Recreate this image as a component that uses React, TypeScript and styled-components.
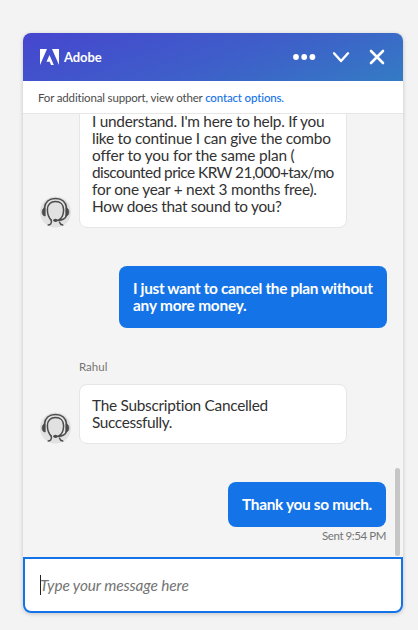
import React from 'react';
import styled, { createGlobalStyle } from 'styled-components';

const GlobalStyle = createGlobalStyle`
  *, *::before, *::after { box-sizing: border-box; }
  body {
    margin: 0;
    background: #f3f3f3;
    font-family: Lato, 'Noto Sans', sans-serif;
  }
`;

const Page = styled.main`
  height: 630px;
  padding: 33px 15px 17px 23px;
  overflow: hidden;
`;

const Panel = styled.section`
  display: flex;
  flex-direction: column;
  width: 380px;
  height: 580px;
  border-radius: 8px;
  background: #f4f4f4;
  box-shadow: 0 1px 4px rgba(0, 0, 0, 0.2);
`;

const Header = styled.header`
  display: flex;
  align-items: center;
  flex: 0 0 48px;
  padding: 0 17px;
  border-radius: 8px 8px 0 0;
  background: linear-gradient(160deg, #4646cf 0%, #3e5fc9 55%, #347bc4 100%);
  color: #fff;
`;

const Brand = styled.div`
  display: flex;
  align-items: center;
  flex: 1;
  gap: 5px;
`;

const Actions = styled.div`
  display: flex;
  align-items: center;
  gap: 17px;
`;

const IconButton = styled.button`
  display: flex;
  padding: 0;
  border: 0;
  background: none;
  color: inherit;
`;

const Notice = styled.div`
  display: flex;
  align-items: center;
  flex: 0 0 33px;
  padding: 0 15px;
  border-bottom: 1px solid #e6e6e6;
  background: #fff;
  color: #4b4b4b;
`;

const Text = styled.span<{ $size: number; $spacing?: number; $weight?: number }>`
  font-size: ${(p) => p.$size}px;
  font-weight: ${(p) => p.$weight ?? 400};
  letter-spacing: ${(p) => p.$spacing ?? 0}px;
  line-height: 17px;
  white-space: pre;
`;

const Link = styled.a`
  color: #1473e6;
  font-weight: 500;
`;

const Chat = styled.div`
  position: relative;
  display: flex;
  flex: 1;
  flex-direction: column;
  justify-content: flex-end;
  min-height: 0;
  padding: 0 16px 12px 17px;
  overflow: hidden;
`;

const AgentRow = styled.div`
  display: flex;
  align-items: flex-end;
  flex-shrink: 0;
  gap: 7px;
`;

const Bubble = styled.div<{ $own?: boolean }>`
  display: flex;
  flex-direction: column;
  flex-shrink: 0;
  align-self: ${(p) => (p.$own ? 'flex-end' : 'auto')};
  padding: ${(p) => (p.$own ? '14px' : '12px')};
  border: ${(p) => (p.$own ? '0' : '1px solid #e6e6e6')};
  border-radius: 8px;
  background: ${(p) => (p.$own ? '#1473e6' : '#fff')};
  color: ${(p) => (p.$own ? '#fff' : '#323232')};
`;

const WideBubble = styled(Bubble)`
  width: 268px;
`;

const ShortBubble = styled(Bubble)`
  width: 158px;
  margin: 38px 1px 0 0;
`;

const OwnWideBubble = styled(WideBubble)`
  margin-top: 38px;
`;

const Sender = styled.div`
  display: flex;
  flex: 0 0 17px;
  margin: 30px 0 9px 39px;
  color: #747474;
`;

const Sent = styled.div`
  display: flex;
  flex: 0 0 18px;
  justify-content: flex-end;
  padding-right: 1px;
  color: #747474;
`;

const ScrollThumb = styled.div`
  position: absolute;
  right: 3px;
  bottom: 1px;
  width: 5px;
  height: 88px;
  border-radius: 3px;
  background: #c6c6c6;
`;

const Composer = styled.div`
  display: flex;
  align-items: center;
  flex: 0 0 56px;
  padding: 0 15px;
  border: 2px solid #1473e6;
  border-radius: 0 0 8px 8px;
  background: #fff;
  color: #747474;
  font-style: italic;
`;

const Caret = styled.span`
  width: 1px;
  height: 20px;
  margin-right: -1px;
  background: #222;
`;

const AdobeLogo = () => (
  <svg width="19" height="16" viewBox="0 0 19 16" fill="#fff">
    <path d="M0 0h7L0 16zM12 0h7v16zM9.500 5.900 13.800 16H11l-1.300-3.200H6.500z" />
  </svg>
);

const MoreIcon = () => (
  <svg width="24" height="24" viewBox="0 0 24 24" fill="#fff">
    <circle cx="4" cy="12" r="2.900" />
    <circle cx="12.200" cy="12" r="2.900" />
    <circle cx="20.400" cy="12" r="2.900" />
  </svg>
);

const ChevronIcon = () => (
  <svg width="18" height="24" viewBox="0 0 18 24" fill="none" stroke="#fff" strokeWidth="2.4" strokeLinecap="round" strokeLinejoin="round">
    <path d="m1 8.300 7 7.700 7-7.700" />
  </svg>
);

const CloseIcon = () => (
  <svg width="18" height="24" viewBox="0 0 18 24" fill="none" stroke="#fff" strokeWidth="2.600" strokeLinecap="round">
    <path d="m3 6 12 12M15 6 3 18" />
  </svg>
);

const AgentAvatar = () => (
  <svg width="32" height="32" viewBox="0 0 32 32" fill="none" stroke="#4b4b4b" strokeWidth="1.500" strokeLinecap="round">
    <circle cx="15.500" cy="16" r="15.500" fill="#e1e1e1" stroke="none" />
    <path d="M4.300 12.500C5 6.200 9.300 2.600 15.500 2.600S26 6.200 26.700 12.500" />
    <path d="M11.300 24.300C8.700 21.500 7.400 18.500 7.400 13.700 7.400 8.700 10.500 5.600 15.500 5.600s8.100 3.100 8.100 8.100c0 4.800-1.600 8.300-4.600 10" />
    <path d="M11.300 24.300c.6 2.900-.6 4.400-3 4.800M19.500 26.200c.4 1.700 1.400 2.600 3.200 2.900M26.400 19.500c-.8 3.600-4.400 4.900-9.700 4.900" />
    <path d="M5.300 12v8H4.500C3 19.500 2.100 18.300 2.100 16s.9-3.500 2.400-4zM25.700 12v8h.8c1.500-.5 2.400-1.700 2.400-4s-.9-3.500-2.400-4z" fill="#4b4b4b" strokeWidth=".6" />
    <ellipse cx="15.400" cy="24.300" rx="2.200" ry="1.600" fill="#4b4b4b" stroke="none" />
  </svg>
);

const offer: [string, number][] = [
  ["I understand. I'm here to help. If you", -0.28],
  ['like to continue I can give the combo', -0.23],
  ['offer to you for the same plan (', -0.17],
  ['discounted price KRW 21,000+tax/mo', -0.55],
  ['for one year + next 3 months free).', -0.24],
  ['How does that sound to you?', -0.3],
];

export default function App() {
  return (
    <Page>
      <GlobalStyle />
      <Panel>
        <Header>
          <Brand>
            <AdobeLogo />
            <Text $size={13} $weight={700} $spacing={-0.1}>Adobe</Text>
          </Brand>
          <Actions>
            <IconButton aria-label="More"><MoreIcon /></IconButton>
            <IconButton aria-label="Minimize"><ChevronIcon /></IconButton>
            <IconButton aria-label="Close"><CloseIcon /></IconButton>
          </Actions>
        </Header>
        <Notice>
          <Text $size={11.5} $spacing={-0.16}>For additional support, view other <Link>contact options.</Link></Text>
        </Notice>
        <Chat>
          <AgentRow>
            <AgentAvatar />
            <WideBubble>
              {offer.map(([line, spacing]) => (
                <Text key={line} $size={15.4} $spacing={spacing}>{line}</Text>
              ))}
            </WideBubble>
          </AgentRow>
          <OwnWideBubble $own>
            <Text $size={15.4} $weight={700} $spacing={-0.35}>I just want to cancel the plan without</Text>
            <Text $size={15.4} $weight={700} $spacing={-0.2}>any more money.</Text>
          </OwnWideBubble>
          <Sender><Text $size={11.5} $spacing={0}>Rahul</Text></Sender>
          <AgentRow>
            <AgentAvatar />
            <WideBubble>
              <Text $size={15.4} $spacing={-0.28}>The Subscription Cancelled</Text>
              <Text $size={15.4} $spacing={-0.38}>Successfully.</Text>
            </WideBubble>
          </AgentRow>
          <ShortBubble $own>
            <Text $size={15.4} $weight={700} $spacing={-0.32}>Thank you so much.</Text>
          </ShortBubble>
          <Sent><Text $size={11.5} $spacing={-0.43}>Sent 9:54 PM</Text></Sent>
          <ScrollThumb />
        </Chat>
        <Composer>
          <Caret />
          <Text $size={15.4} $spacing={-0.1}>Type your message here</Text>
        </Composer>
      </Panel>
    </Page>
  );
}
